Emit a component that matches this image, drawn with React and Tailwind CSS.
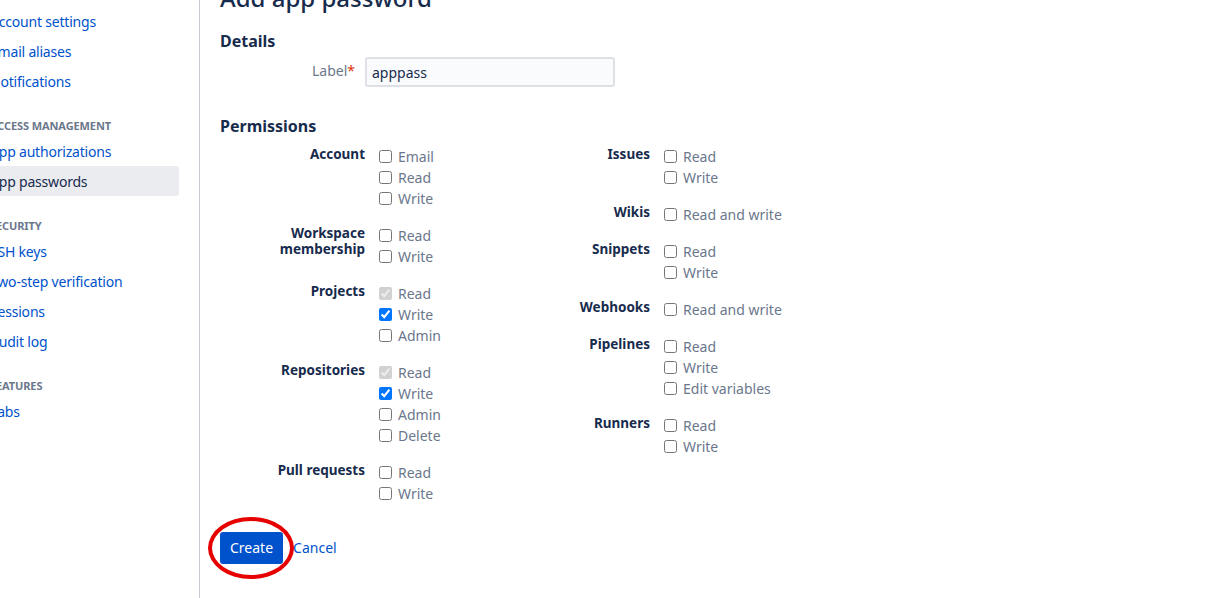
import React from 'react';

const sections = [
  { title: 'General', items: ['Account settings', 'Email aliases', 'Notifications'] },
  { title: 'Access management', items: ['App authorizations', 'App passwords'] },
  { title: 'Security', items: ['SSH keys', 'Two-step verification', 'Sessions', 'Audit log'] },
  { title: 'Features', items: ['Labs'] },
];

const leftGroups = [
  { label: ['Account'], options: [['Email'], ['Read'], ['Write']] },
  { label: ['Workspace', 'membership'], options: [['Read'], ['Write']] },
  { label: ['Projects'], options: [['Read', 'locked'], ['Write', 'on'], ['Admin']] },
  { label: ['Repositories'], options: [['Read', 'locked'], ['Write', 'on'], ['Admin'], ['Delete']] },
  { label: ['Pull requests'], options: [['Read'], ['Write']] },
];

const rightGroups = [
  { label: ['Issues'], options: [['Read'], ['Write']] },
  { label: ['Wikis'], options: [['Read and write']] },
  { label: ['Snippets'], options: [['Read'], ['Write']] },
  { label: ['Webhooks'], options: [['Read and write']] },
  { label: ['Pipelines'], options: [['Read'], ['Write'], ['Edit variables']] },
  { label: ['Runners'], options: [['Read'], ['Write']] },
];

const Sidebar = () => (
  <div className="w-[200px] shrink-0 border-r border-[#c8ccd2] min-h-[598px]">
    <div className="ml-[-18px] w-[197px] mt-[-14px]">
      {sections.map((s, i) => (
        <div key={s.title} className={i > 0 ? 'mt-[20px]' : ''}>
          <div className="h-[20px] px-2 flex items-center text-[11px] font-bold uppercase tracking-[-0.1px] text-[#6b778c]">
            {s.title}
          </div>
          {s.items.map(item => {
            const active = item === 'App passwords';
            return (
              <div
                key={item}
                className={
                  'h-[30px] px-2 flex items-center text-[14px] tracking-[-0.2px] rounded-[3px] ' +
                  (active ? 'bg-[#ebecf0] text-[#172b4d]' : 'text-[#0052cc]')
                }
              >
                {item}
              </div>
            );
          })}
        </div>
      ))}
    </div>
  </div>
);

const Group = ({ group }) => (
  <div className="flex">
    <div className="w-[145px] shrink-0 text-right font-bold text-[13.5px] leading-[16px] text-[#172b4d]">
      {group.label.map(l => (
        <div key={l}>{l}</div>
      ))}
    </div>
    <div className="pl-[14px] flex flex-col">
      {group.options.map(([name, state]) => (
        <label key={name} className="h-[21px] flex items-center gap-[6px] text-[14px] text-[#6b778c]">
          <input
            type="checkbox"
            className="m-0 w-[13px] h-[13px]"
            defaultChecked={state === 'on' || state === 'locked'}
            disabled={state === 'locked'}
          />
          <span>{name}</span>
        </label>
      ))}
    </div>
  </div>
);

const Column = ({ groups }) => (
  <div className="w-[285px] flex flex-col gap-[16px]">
    {groups.map(g => (
      <Group key={g.label.join(' ')} group={g} />
    ))}
  </div>
);

export default function App() {
  return (
    <div className="w-[1232px] h-[598px] overflow-hidden bg-white flex" style={{ fontFamily: '"Noto Sans", sans-serif' }}>
      <Sidebar />
      <div className="flex-1 pl-5 flex flex-col">
        <h1 className="mt-[-16px] text-[24px] leading-[28px] font-medium text-[#172b4d]">Add app password</h1>
        <h2 className="mt-[17px] text-[16px] leading-[24px] font-bold text-[#172b4d]">Details</h2>
        <div className="mt-[4px] flex items-center">
          <div className="w-[135px] text-right text-[14px] leading-[20px] text-[#6b778c] mt-[-2px]">
            Label<span className="text-[#de350b]">*</span>
          </div>
          <input
            type="text"
            defaultValue="apppass"
            className="ml-[10px] w-[250px] h-[30px] px-[5px] bg-[#fafbfc] border-2 border-[#dfe1e6] rounded-[3px] text-[14px] text-[#172b4d] outline-none"
          />
        </div>
        <h2 className="mt-[27px] text-[16px] leading-[24px] font-bold text-[#172b4d]">Permissions</h2>
        <div className="mt-[8px] flex">
          <Column groups={leftGroups} />
          <Column groups={rightGroups} />
        </div>
        <div className="mt-[28px] flex items-center gap-[10px]">
          <div className="relative">
            <button className="h-[32px] px-[10px] pb-[1px] rounded-[3px] bg-[#0052cc] text-white text-[14px]">Create</button>
            <div className="absolute left-[-12px] top-[-15px] w-[86px] h-[62px] rounded-[50%] border-[4px] border-[#e60000] pointer-events-none" />
          </div>
          <a href="#" className="text-[14px] text-[#0052cc] mt-[-1px]">Cancel</a>
        </div>
      </div>
    </div>
  );
}
